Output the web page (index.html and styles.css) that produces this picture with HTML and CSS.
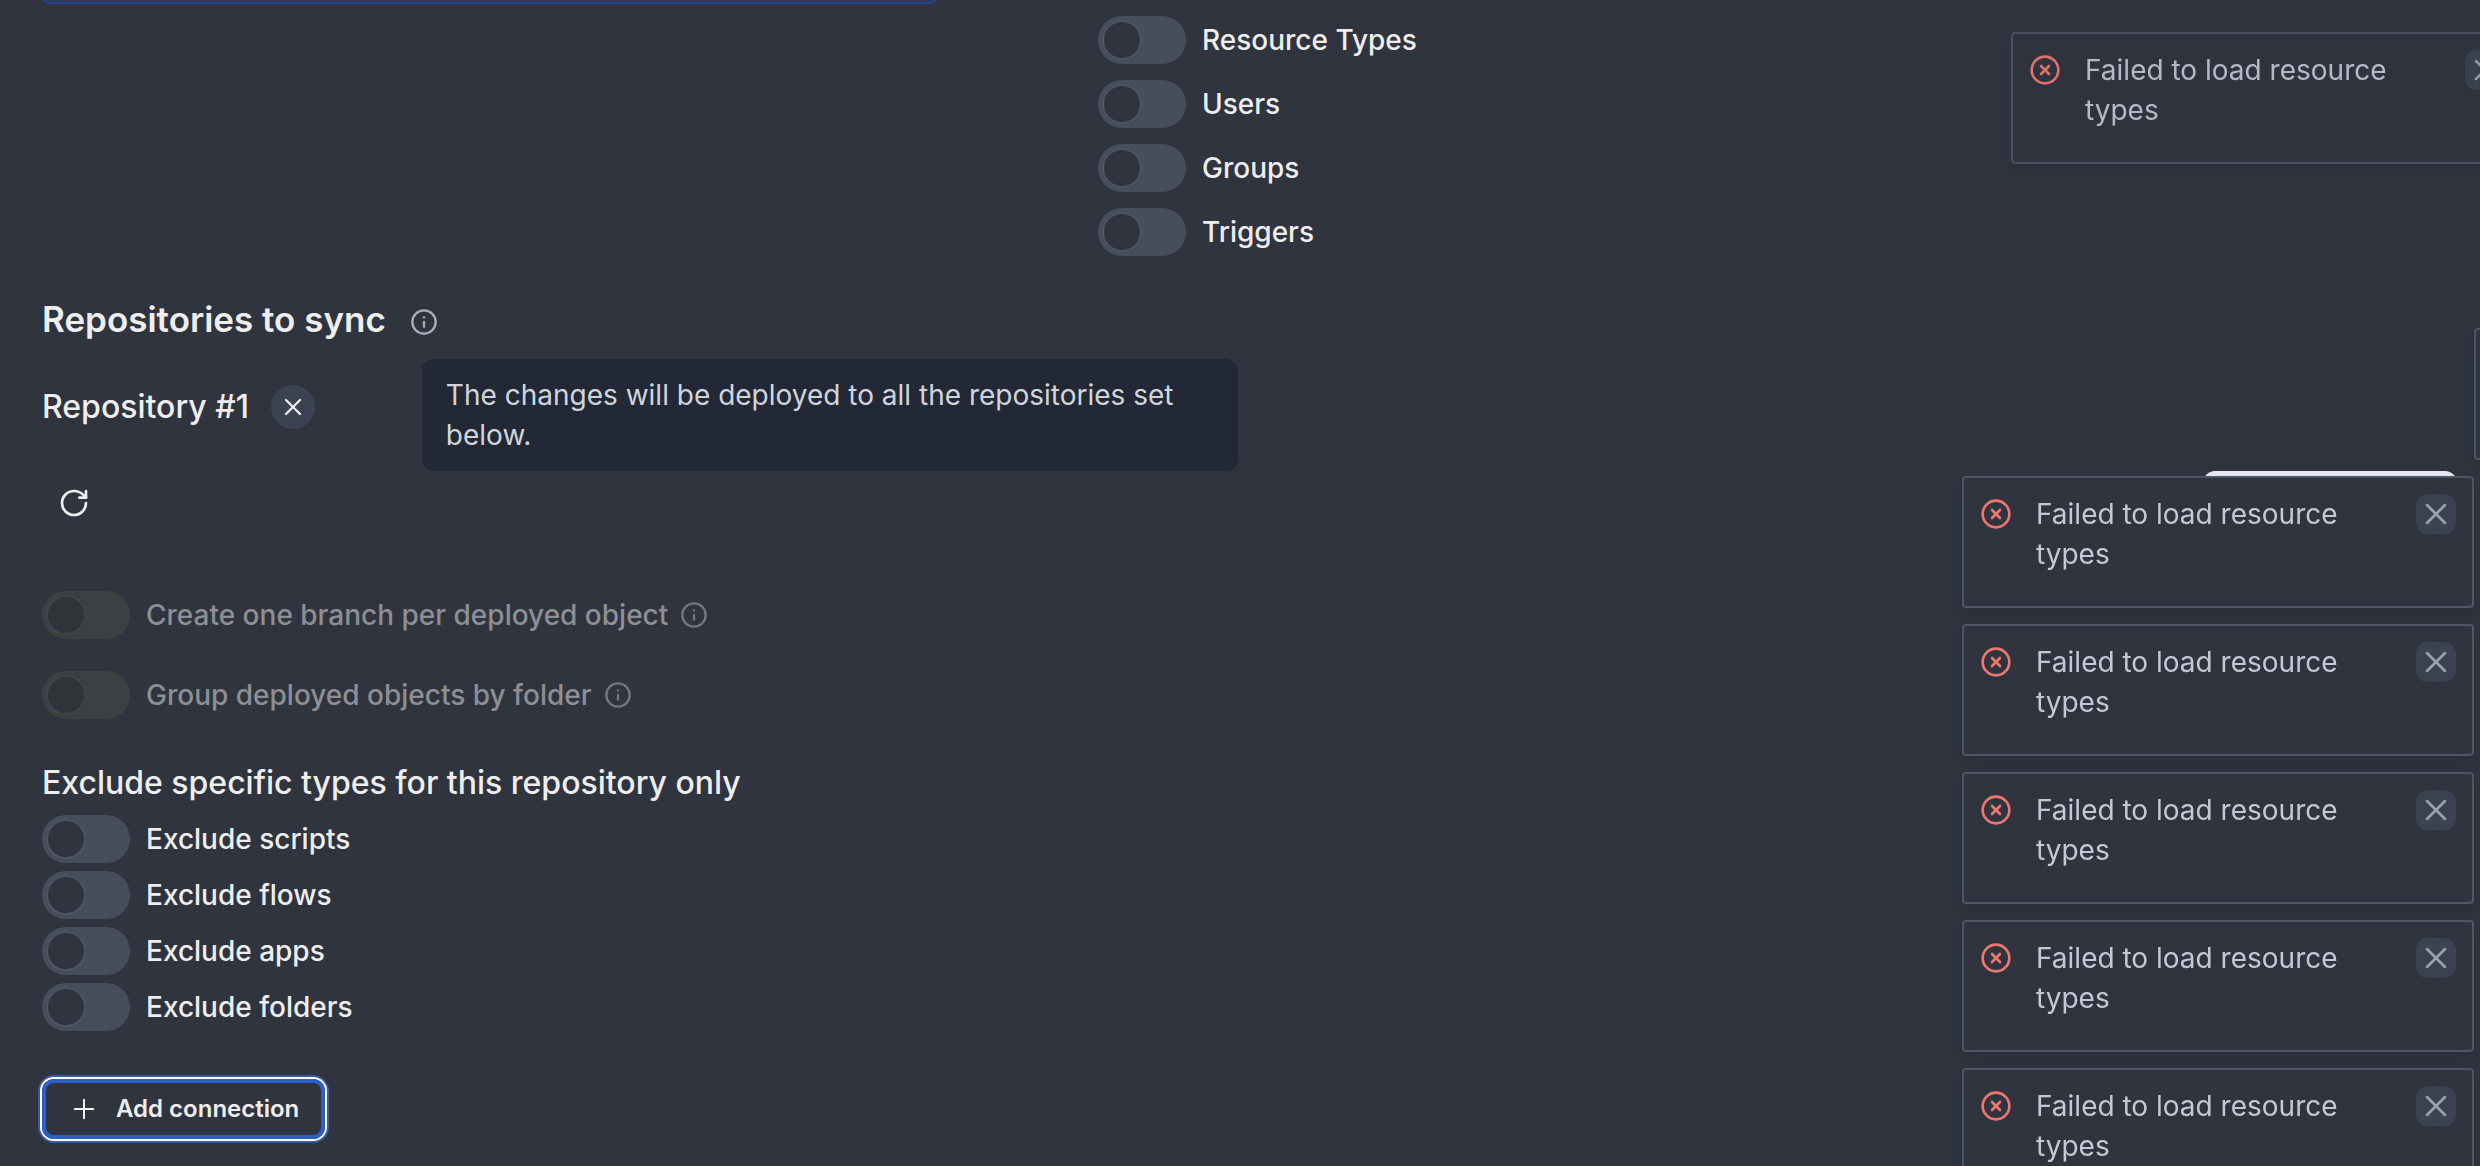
FILE: index.html
```html
<!DOCTYPE html>
<html lang="en">
<head>
<meta charset="utf-8">
<meta name="viewport" content="width=device-width, initial-scale=1">
<title>Repositories to sync</title>
<link rel="stylesheet" href="styles.css">
</head>
<body>
<svg class="sprite" aria-hidden="true">
  <symbol id="info" viewBox="0 0 24 24"><circle cx="12" cy="12" r="10"/><path d="M12 16v-4M12 8h.01"/></symbol>
  <symbol id="x" viewBox="0 0 24 24"><path d="M18 6 6 18M6 6l12 12"/></symbol>
  <symbol id="x-circle" viewBox="0 0 24 24"><circle cx="12" cy="12" r="10"/><path d="m15 9-6 6M9 9l6 6"/></symbol>
  <symbol id="plus" viewBox="0 0 24 24"><path d="M5 12h14M12 5v14"/></symbol>
  <symbol id="rotate" viewBox="0 0 24 24"><path d="M21 12a9 9 0 1 1-9-9c2.520 0 4.930 1 6.740 2.740L21 8"/><path d="M21 3v5h-5"/></symbol>
</svg>

<main class="page">
  <div class="top">
    <div class="callout"></div>
    <div class="filters">
      <label class="toggle"><input type="checkbox" role="switch"><span>Resource Types</span></label>
      <label class="toggle"><input type="checkbox" role="switch"><span>Users</span></label>
      <label class="toggle"><input type="checkbox" role="switch"><span>Groups</span></label>
      <label class="toggle"><input type="checkbox" role="switch"><span>Triggers</span></label>
    </div>
  </div>

  <div class="section-head">
    <h2>Repositories to sync</h2>
    <span class="tip-anchor">
      <svg class="icon icon-info"><use href="#info"/></svg>
      <span class="tooltip" role="tooltip">The changes will be deployed to all the repositories set below.</span>
    </span>
  </div>

  <div class="repo-head">
    <h3>Repository #1</h3>
    <button class="round" type="button"><svg class="icon icon-x"><use href="#x"/></svg></button>
  </div>

  <button class="refresh" type="button"><svg class="icon icon-lg"><use href="#rotate"/></svg></button>

  <div class="options">
    <label class="toggle disabled"><input type="checkbox" role="switch" disabled><span>Create one branch per deployed object</span><svg class="icon icon-info"><use href="#info"/></svg></label>
    <label class="toggle disabled"><input type="checkbox" role="switch" disabled><span>Group deployed objects by folder</span><svg class="icon icon-info"><use href="#info"/></svg></label>
  </div>

  <h4>Exclude specific types for this repository only</h4>
  <div class="excludes">
    <label class="toggle"><input type="checkbox" role="switch"><span>Exclude scripts</span></label>
    <label class="toggle"><input type="checkbox" role="switch"><span>Exclude flows</span></label>
    <label class="toggle"><input type="checkbox" role="switch"><span>Exclude apps</span></label>
    <label class="toggle"><input type="checkbox" role="switch"><span>Exclude folders</span></label>
  </div>

  <button class="add" type="button"><svg class="icon icon-lg"><use href="#plus"/></svg>Add connection</button>
</main>

<button class="save" type="button"></button>

<div class="toasts">
  <div class="toast leaving">
    <svg class="icon icon-lg"><use href="#x-circle"/></svg>
    <p>Failed to load resource types</p>
    <button class="close" type="button"><svg class="icon icon-close"><use href="#x"/></svg></button>
  </div>
  <div class="toast gone"></div>
  <div class="toast entering"></div>
  <div class="toast">
    <svg class="icon icon-lg"><use href="#x-circle"/></svg>
    <p>Failed to load resource types</p>
    <button class="close" type="button"><svg class="icon icon-close"><use href="#x"/></svg></button>
  </div>
  <div class="toast">
    <svg class="icon icon-lg"><use href="#x-circle"/></svg>
    <p>Failed to load resource types</p>
    <button class="close" type="button"><svg class="icon icon-close"><use href="#x"/></svg></button>
  </div>
  <div class="toast">
    <svg class="icon icon-lg"><use href="#x-circle"/></svg>
    <p>Failed to load resource types</p>
    <button class="close" type="button"><svg class="icon icon-close"><use href="#x"/></svg></button>
  </div>
  <div class="toast">
    <svg class="icon icon-lg"><use href="#x-circle"/></svg>
    <p>Failed to load resource types</p>
    <button class="close" type="button"><svg class="icon icon-close"><use href="#x"/></svg></button>
  </div>
  <div class="toast">
    <svg class="icon icon-lg"><use href="#x-circle"/></svg>
    <p>Failed to load resource types</p>
    <button class="close" type="button"><svg class="icon icon-close"><use href="#x"/></svg></button>
  </div>
</div>
</body>
</html>
```
FILE: styles.css
```css
*, *::before { box-sizing: border-box; }

body {
  margin: 0;
  min-height: 100vh;
  overflow: hidden;
  background: #30343f;
  color: #eeeeee;
  font: 400 28px/40px Inter, "Liberation Sans", sans-serif;
}

h2, h3, h4, p { margin: 0; }
button { padding: 0; border: 0; font: inherit; color: inherit; background: none; cursor: pointer; }

.sprite { display: none; }
.icon { flex: none; fill: none; stroke: currentColor; stroke-width: 2; stroke-linecap: round; stroke-linejoin: round; }
.icon-info { width: 28px; height: 28px; color: #a8adba; }
.icon-x { width: 28px; height: 28px; }
.icon-lg { width: 32px; height: 32px; }
.icon-close { width: 36px; height: 36px; color: #9ca3af; stroke-width: 1.7; }

.page { padding: 0 42px; display: flex; flex-direction: column; align-items: flex-start; }

.top { width: 100%; display: grid; grid-template-columns: minmax(0, 896px) 1fr; column-gap: 160px; align-items: start; }
.callout { height: 16px; margin-top: -12px; border: 2px solid #2b4092; border-radius: 12px; background: #2c3a5c; }
.filters { padding-top: 16px; display: flex; flex-direction: column; gap: 16px; }

.toggle { display: flex; align-items: center; gap: 16px; font-weight: 500; }
.toggle input {
  appearance: none;
  flex: none;
  width: 88px;
  height: 48px;
  margin: 0;
  padding: 4px;
  border: 0;
  border-radius: 24px;
  background: #464d5c;
}
.toggle input::before {
  content: "";
  display: block;
  width: 40px;
  height: 40px;
  border: 2px solid #4b5563;
  border-radius: 50%;
  background: #30343f;
}
.disabled { color: #8d8f95; }
.disabled input { background: #3d4043; }
.disabled input::before { background: #303338; border-color: #414447; }
.disabled .icon { margin-left: -4px; color: #75777d; }

.section-head { margin-top: 40px; display: flex; align-items: center; gap: 24px; }
h2 { font-size: 35px; line-height: 46px; font-weight: 600; }
.tip-anchor { position: relative; display: flex; padding-top: 6px; }
.tooltip {
  position: absolute;
  z-index: 1;
  top: 57px;
  left: 12px;
  width: 816px;
  padding: 16px 24px;
  border-radius: 12px;
  background: #222835;
  color: #d1d5db;
}

.repo-head { margin-top: 42px; display: flex; align-items: center; gap: 22px; }
h3, h4 { font-size: 32px; line-height: 46px; font-weight: 500; }
.round { width: 44px; height: 44px; border-radius: 50%; background: #3d4252; display: grid; place-items: center; }

.refresh { margin-top: 47px; width: 64px; height: 52px; display: grid; place-items: center; }
.options { margin-top: 62px; display: flex; flex-direction: column; gap: 32px; }
h4 { margin-top: 41px; }
.excludes { margin-top: 9px; display: flex; flex-direction: column; gap: 8px; }

.add {
  margin-top: 48px;
  height: 60px;
  padding: 0 26px;
  display: flex;
  align-items: center;
  gap: 16px;
  border-radius: 12px;
  font-size: 24px;
  font-weight: 600;
  box-shadow: inset 0 0 0 4px #2a5fca, 0 0 0 2px #ffffff, 0 0 0 4px #3d5a9e;
}
.add .icon { stroke-width: 1.5; }

.save {
  position: fixed;
  top: 471px;
  right: 23px;
  width: 254px;
  height: 72px;
  border-radius: 12px;
  background: #e8e6f5;
}

.toasts {
  position: fixed;
  z-index: 2;
  top: 32px;
  right: 6px;
  width: 512px;
  display: flex;
  flex-direction: column;
  gap: 16px;
}
.toast {
  min-height: 132px;
  padding: 16px;
  display: flex;
  align-items: flex-start;
  border: 2px solid #4b5563;
  border-radius: 4px;
  background: #30343f;
  color: #c4c8d4;
  box-shadow: 0 8px 16px rgba(0, 0, 0, 0.1);
}
.toast > .icon { margin-top: 4px; color: #f0776f; }
.toast p { flex: 1; margin-left: 24px; padding-right: 60px; }
.close { flex: none; width: 40px; height: 40px; border-radius: 12px; background: #3d4252; display: grid; place-items: center; }
.leaving { transform: translateX(49px); opacity: 0.9; }
.gone { visibility: hidden; }
.entering { transform: translateX(512px); }
```
